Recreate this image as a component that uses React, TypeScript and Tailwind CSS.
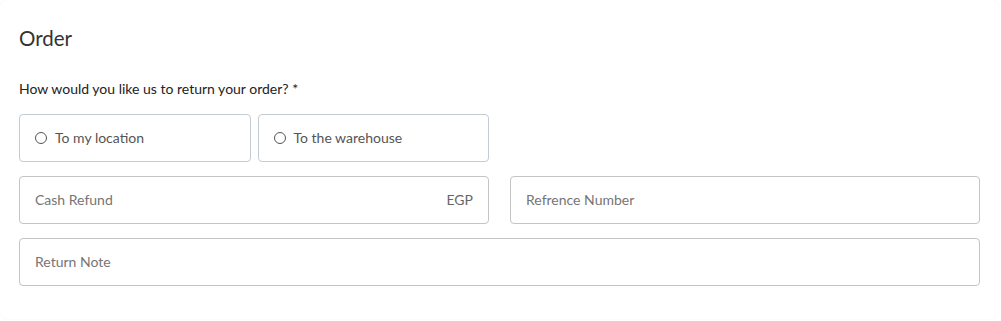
import { useState } from "react";

function RadioBox({ label, checked, onSelect }: { label: string; checked: boolean; onSelect: () => void }) {
  return (
    <label className="flex h-12 cursor-pointer items-center gap-2 rounded border border-[#c3cbd3] pb-px pl-[15px]">
      <span className="flex h-3 w-3 items-center justify-center rounded-full border border-[#555]">
        {checked ? <span className="h-1.5 w-1.5 rounded-full bg-[#555]" /> : null}
      </span>
      <input type="radio" className="hidden" checked={checked} onChange={onSelect} />
      <span className="text-[14px] text-[#555]">{label}</span>
    </label>
  );
}

export default function App() {
  const [method, setMethod] = useState<string | null>(null);

  return (
    <div className="h-[321px] w-[1001px] bg-white font-['Lato',sans-serif]">
      <div className="h-[319px] w-[999px] rounded-lg bg-white px-[19px] pt-[26px] shadow-[0_0_2px_rgba(0,0,0,0.05)]">
        <h2 className="m-0 text-[20.5px] leading-6 text-[#333]">Order</h2>

        <p className="mt-[31px] text-[14px] leading-4 text-[#222]">
          How would you like us to return your order? *
        </p>

        <div className="mt-[17px] grid w-[961px] grid-cols-2 gap-x-[21px]">
          <div className="grid grid-cols-2 gap-[7px]">
            <RadioBox label="To my location" checked={method === "location"} onSelect={() => setMethod("location")} />
            <RadioBox label="To the warehouse" checked={method === "warehouse"} onSelect={() => setMethod("warehouse")} />
          </div>
        </div>

        <div className="mt-[14px] grid w-[961px] grid-cols-2 gap-x-[21px]">
          <div className="flex h-12 items-center rounded border border-[#c4c4c4] pb-px px-[15px]">
            <input
              placeholder="Cash Refund"
              className="min-w-0 flex-1 bg-transparent text-[14px] text-[#333] outline-none placeholder:text-[#757575]"
            />
            <span className="text-[14px] text-[#666]">EGP</span>
          </div>
          <div className="flex h-12 items-center rounded border border-[#c4c4c4] pb-px px-[15px]">
            <input
              placeholder="Refrence Number"
              className="min-w-0 flex-1 bg-transparent text-[14px] text-[#333] outline-none placeholder:text-[#757575]"
            />
          </div>
        </div>

        <div className="mt-[14px] flex h-12 w-[961px] items-center rounded border border-[#c4c4c4] pb-px px-[15px]">
          <input
            placeholder="Return Note"
            className="min-w-0 flex-1 bg-transparent text-[14px] text-[#333] outline-none placeholder:text-[#757575]"
          />
        </div>
      </div>
    </div>
  );
}
